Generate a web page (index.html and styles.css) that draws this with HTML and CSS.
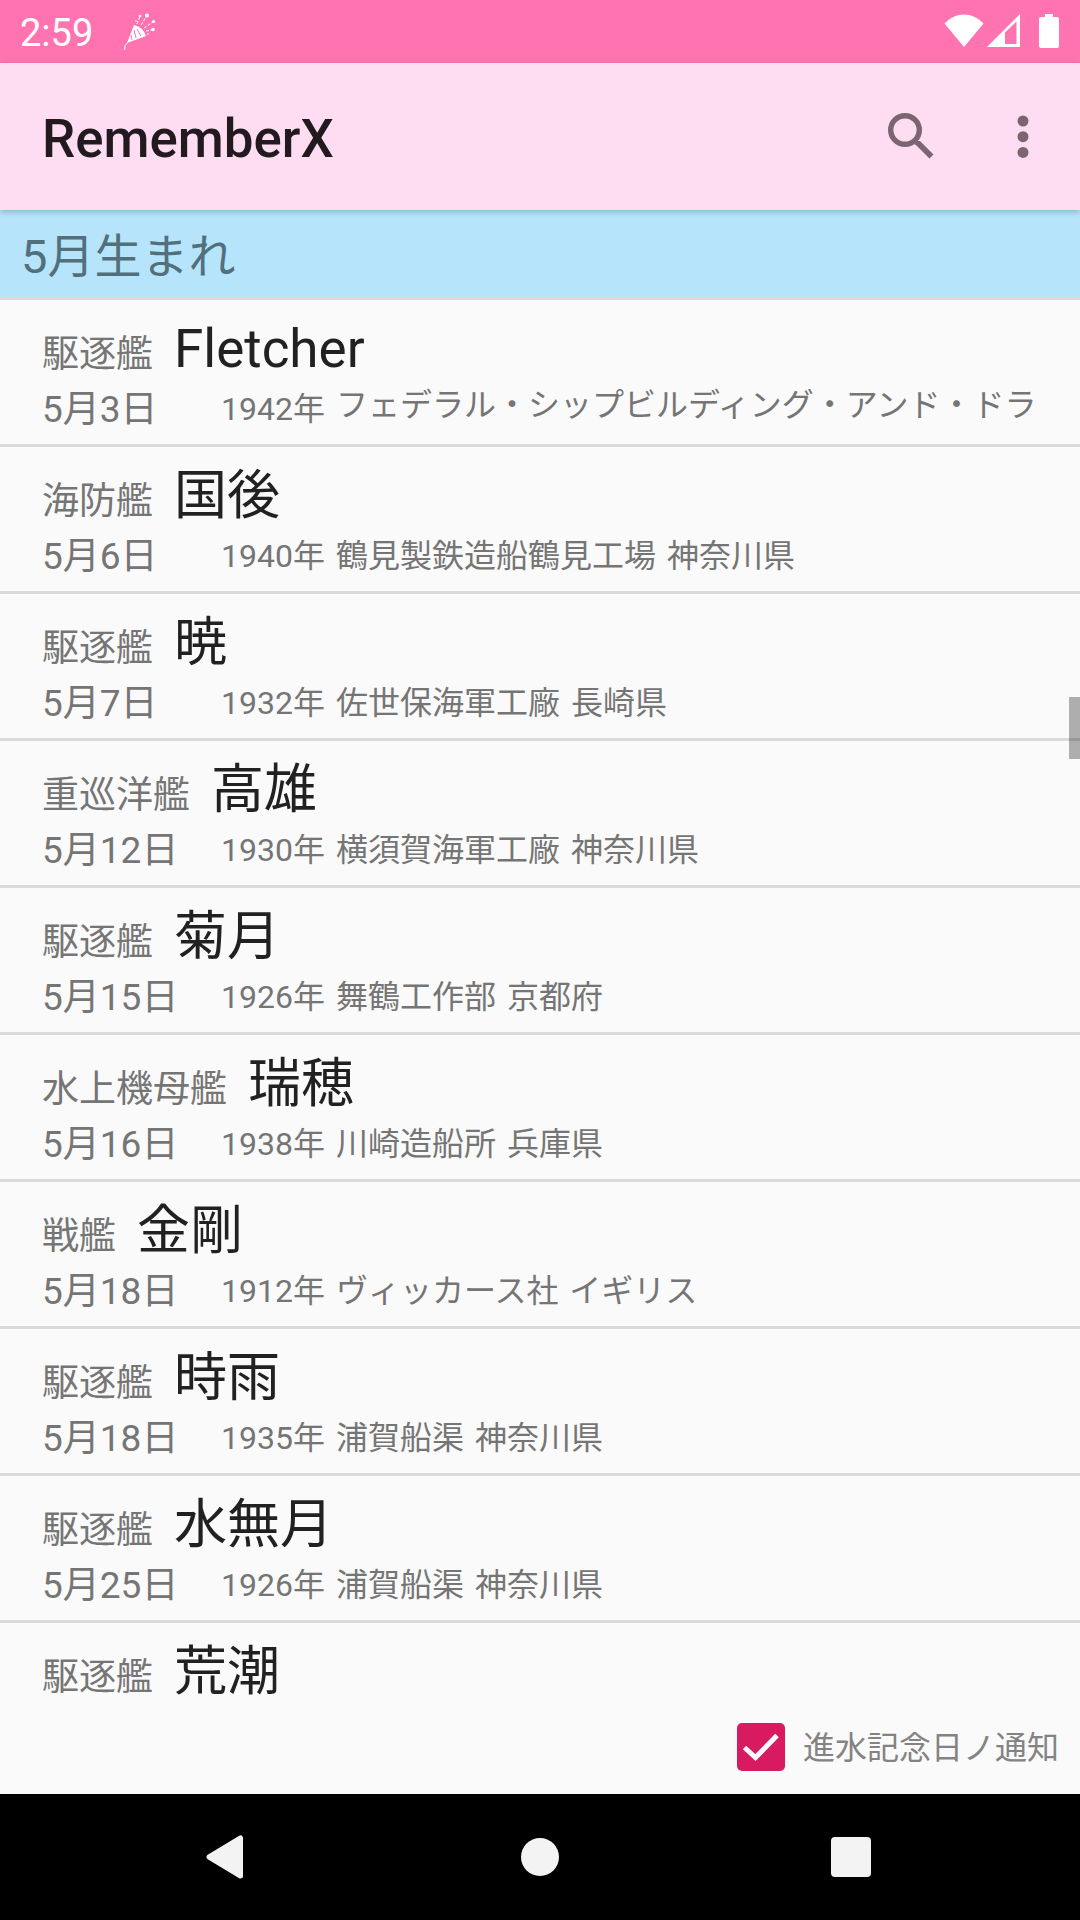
FILE: index.html
```html
<!DOCTYPE html>
<html lang="ja">
<head>
    <meta charset="UTF-8">
    <meta name="viewport" content="width=device-width, initial-scale=1.0">
    <title>RememberX</title>
    <link rel="stylesheet" href="styles.css">
</head>
<body>
    <!-- status bar -->
    <div class="status-bar">
        <span class="clock">2:59</span>
        <svg class="party" width="34" height="40" viewBox="0 0 34 40">
            <path d="M11 12 L4 30 L23 23 Q20 14 11 12Z" fill="#fff"/>
            <path d="M11 17 L13 25 M14 16 L18 23 M8 22 L9 27" stroke="#ff74b0" stroke-width="1"/>
            <path d="M5 29 Q1 32 1.500 37" stroke="#fff" stroke-width="1" fill="none"/>
            <path d="M14 11 L17 3 M18 12 L23 4 M21 15 L30 9 M23 18 L29 17" stroke="#fff" stroke-width="1" stroke-dasharray="3 1.500" fill="none"/>
            <g fill="#fff">
                <circle cx="17" cy="3" r="1.300"/>
                <circle cx="24" cy="2.500" r="2"/>
                <circle cx="30.500" cy="8.500" r="1.600"/>
                <circle cx="30" cy="16.500" r="1.800"/>
                <circle cx="13" cy="8" r=".8"/>
                <circle cx="25" cy="21" r=".8"/>
            </g>
        </svg>
        <div class="status-icons">
            <svg class="wifi" width="40" height="34" viewBox="0 0 40 34">
                <path d="M.5 9.500 C12 -2.500 28 -2.500 39.500 9.500 L20 33Z" fill="#fff"/>
            </svg>
            <svg class="signal" width="33" height="33" viewBox="0 0 33 33">
                <path fill-rule="evenodd" d="M0 33 L33 0 V33Z M18 18.500 V30 H29.500 V7.500Z" fill="#fff"/>
            </svg>
            <svg class="battery" width="20" height="34" viewBox="0 0 20 34">
                <path d="M6 0 H14 V3 H18 Q20 3 20 5 V32 Q20 34 18 34 H2 Q0 34 0 32 V5 Q0 3 2 3 H6Z" fill="#fff"/>
            </svg>
        </div>
    </div>

    <!-- toolbar -->
    <div class="toolbar">
        <h1>RememberX</h1>
        <svg class="search" width="46" height="46" viewBox="0 0 46 46">
            <circle cx="17" cy="17" r="14.300" fill="none" stroke="#7a6570" stroke-width="5.400"/>
            <path d="M26.500 31.500 L28.500 28 L32 28 L45.500 41.500 L41.500 45.500 L28 32Z" fill="#7a6570"/>
        </svg>
        <svg class="more" width="12" height="44" viewBox="0 0 12 44" fill="#7a6570">
            <circle cx="6" cy="6" r="5.500"/>
            <circle cx="6" cy="21.700" r="5.500"/>
            <circle cx="6" cy="37.400" r="5.500"/>
        </svg>
    </div>

    <div class="month">5月生まれ</div>

    <!-- ship list -->
    <div class="ship-list">
        <div class="ship">
            <div class="line top"><span class="type">駆逐艦</span><span class="name">Fletcher</span></div>
            <div class="line"><span class="date">5月3日</span><span class="year">1942年</span><span class="yard raised">フェデラル・シップビルディング・アンド・ドラ</span></div>
        </div>
        <div class="ship">
            <div class="line top"><span class="type">海防艦</span><span class="name">国後</span></div>
            <div class="line"><span class="date">5月6日</span><span class="year">1940年</span><span class="yard">鶴見製鉄造船鶴見工場 神奈川県</span></div>
        </div>
        <div class="ship">
            <div class="line top"><span class="type">駆逐艦</span><span class="name">暁</span></div>
            <div class="line"><span class="date">5月7日</span><span class="year">1932年</span><span class="yard">佐世保海軍工廠 長崎県</span></div>
        </div>
        <div class="ship">
            <div class="line top"><span class="type">重巡洋艦</span><span class="name">高雄</span></div>
            <div class="line"><span class="date">5月12日</span><span class="year">1930年</span><span class="yard">横須賀海軍工廠 神奈川県</span></div>
        </div>
        <div class="ship">
            <div class="line top"><span class="type">駆逐艦</span><span class="name">菊月</span></div>
            <div class="line"><span class="date">5月15日</span><span class="year">1926年</span><span class="yard">舞鶴工作部 京都府</span></div>
        </div>
        <div class="ship">
            <div class="line top"><span class="type">水上機母艦</span><span class="name">瑞穂</span></div>
            <div class="line"><span class="date">5月16日</span><span class="year">1938年</span><span class="yard">川崎造船所 兵庫県</span></div>
        </div>
        <div class="ship">
            <div class="line top"><span class="type">戦艦</span><span class="name">金剛</span></div>
            <div class="line"><span class="date">5月18日</span><span class="year">1912年</span><span class="yard">ヴィッカース社 イギリス</span></div>
        </div>
        <div class="ship">
            <div class="line top"><span class="type">駆逐艦</span><span class="name">時雨</span></div>
            <div class="line"><span class="date">5月18日</span><span class="year">1935年</span><span class="yard">浦賀船渠 神奈川県</span></div>
        </div>
        <div class="ship">
            <div class="line top"><span class="type">駆逐艦</span><span class="name">水無月</span></div>
            <div class="line"><span class="date">5月25日</span><span class="year">1926年</span><span class="yard">浦賀船渠 神奈川県</span></div>
        </div>
        <div class="ship">
            <div class="line top"><span class="type">駆逐艦</span><span class="name">荒潮</span></div>
        </div>
        <div class="scrollbar"></div>
    </div>

    <div class="notify">
        <svg class="checkbox" width="48" height="48" viewBox="0 0 48 48">
            <rect width="48" height="48" rx="5" fill="#d81b60"/>
            <path d="M7.500 24.500 L18.500 34.500 L40 12.500" fill="none" stroke="#fafafa" stroke-width="5"/>
        </svg>
        <span>進水記念日ノ通知</span>
    </div>

    <!-- navigation bar -->
    <div class="nav-bar">
        <svg width="38" height="44" viewBox="0 0 38 44">
            <path d="M3 22 L34.500 3 V41Z" fill="#f3f3f3" stroke="#f3f3f3" stroke-width="5" stroke-linejoin="round"/>
        </svg>
        <div class="home"></div>
        <div class="recent"></div>
    </div>
</body>
</html>
```

FILE: styles.css
```css
body {
    margin: 0;
    width: 1080px;
    height: 1920px;
    overflow: hidden;
    display: flex;
    flex-direction: column;
    background-color: #fafafa;
    font-family: Roboto, "Noto Sans CJK JP", sans-serif;
    color: #757575;
}

svg {
    display: block;
    flex: none;
}

.status-bar {
    height: 63px;
    flex: none;
    display: flex;
    align-items: flex-start;
    background-color: #ff74b0;
    color: #fff;
}

.clock {
    width: 102px;
    padding-left: 20px;
    line-height: 67px;
    font-size: 38px;
}

.party {
    margin: 13px 0 0 1px;
}

.status-icons {
    display: flex;
    align-items: flex-start;
    margin-left: auto;
    padding: 14px 21px 0 0;
}

.signal {
    margin-left: 3px;
}

.battery {
    margin-left: 19px;
}

.toolbar {
    height: 147px;
    flex: none;
    display: flex;
    align-items: center;
    background-color: #fedcf1;
    box-shadow: 0 2px 6px rgba(0, 0, 0, 0.22);
    z-index: 1;
}

.toolbar h1 {
    margin: 5px auto 0 42px;
    font-size: 52.800px;
    font-weight: 500;
    line-height: 62px;
    color: #231a20;
}

.search {
    margin: 0 83px 2px 0;
}

.more {
    margin-right: 51px;
}

.month {
    height: 87px;
    flex: none;
    padding-left: 21px;
    background-color: #b5e4fb;
    color: #52707c;
    font-size: 47px;
    line-height: 94px;
    border-bottom: 3px solid #dadada;
}

.ship-list {
    position: relative;
    height: 1405px;
    flex: none;
    overflow: hidden;
}

.ship {
    height: 144px;
    padding-left: 42px;
    border-bottom: 3px solid #dadada;
}

.ship:nth-child(10) {
    border-bottom: none;
}

.line {
    display: flex;
    align-items: baseline;
    height: 52px;
    line-height: 52px;
    white-space: nowrap;
}

.line.top {
    height: 84px;
    line-height: 99px;
}

.type {
    margin-right: 21px;
    font-size: 37px;
}

.name {
    font-size: 53px;
    color: #212121;
}

.date {
    width: 179px;
    font-size: 37px;
}

.year,
.yard {
    position: relative;
    top: -2px;
    font-size: 32px;
}

.year {
    width: 115px;
}

.yard {
    word-spacing: 3px;
}

.raised {
    top: -6px;
}

.scrollbar {
    position: absolute;
    top: 397px;
    right: 0;
    width: 11px;
    height: 62px;
    background-color: rgba(0, 0, 0, 0.3);
}

.notify {
    height: 89px;
    flex: none;
    display: flex;
    justify-content: flex-end;
    align-items: flex-start;
    padding-right: 21px;
    font-size: 32px;
    line-height: 87px;
    color: #838383;
}

.checkbox {
    margin: 18px 18px 0 0;
}

.nav-bar {
    height: 126px;
    flex: none;
    display: flex;
    align-items: center;
    background-color: #000;
}

.nav-bar svg {
    margin-left: 206px;
}

.home {
    width: 38px;
    height: 38px;
    margin-left: 277px;
    border-radius: 50%;
    background-color: #f3f3f3;
}

.recent {
    width: 40px;
    height: 40px;
    margin-left: 272px;
    border-radius: 4px;
    background-color: #f3f3f3;
}
```
